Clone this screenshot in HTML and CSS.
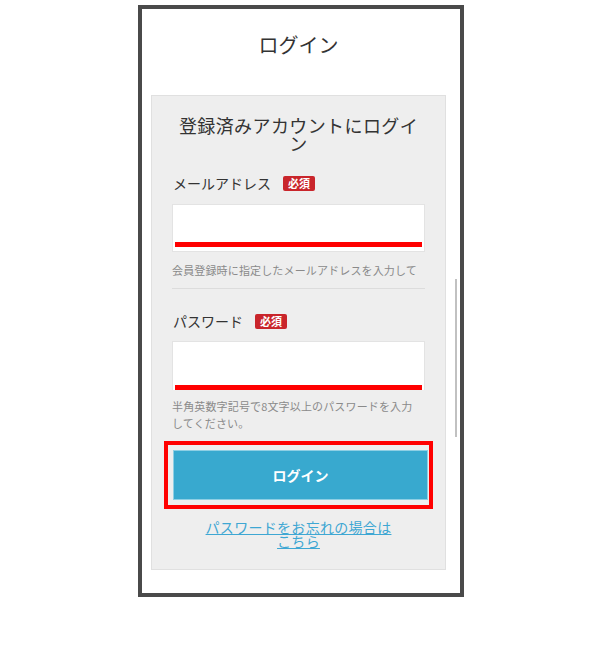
FILE: index.html
```html
<!DOCTYPE html>
<html lang="ja">
<head>
<meta charset="utf-8">
<title>ログイン</title>
<link rel="stylesheet" href="styles.css">
</head>
<body>
<div class="frame">
  <div class="content">
    <h1 class="page-title">ログイン</h1>
    <section class="panel">
      <h2 class="panel-title">登録済みアカウントにログイン</h2>
      <div class="field">
        <div class="label-row"><span class="label">メールアドレス</span><span class="badge">必須</span></div>
        <div class="input input-a"><div class="bar"></div></div>
        <p class="hint">会員登録時に指定したメールアドレスを入力して</p>
      </div>
      <div class="sep"></div>
      <div class="field">
        <div class="label-row"><span class="label">パスワード</span><span class="badge">必須</span></div>
        <div class="input input-b"><div class="bar"></div></div>
        <p class="hint">半角英数字記号で8文字以上のパスワードを入力してください。</p>
      </div>
      <div class="btn-wrap"><button class="btn" type="button">ログイン</button></div>
      <div class="link-row"><a class="link" href="#">パスワードをお忘れの場合はこちら</a></div>
    </section>
  </div>
  <div class="scrollbar"></div>
</div>
</body>
</html>
```
FILE: styles.css
```css
* { box-sizing: border-box; }
html, body { margin: 0; padding: 0; background: #fff; }
body {
  font-family: "Noto Sans CJK JP", "Noto Sans", sans-serif;
  color: #333;
}
.frame {
  position: relative;
  margin: 5px 0 0 138px;
  width: 326px;
  height: 592px;
  border: 4px solid #4a4a4a;
  background: #fff;
}
.content {
  padding: 0 14px 0 9px;
}
.page-title {
  margin: 0;
  padding-top: 21px;
  height: 86px;
  font-size: 20px;
  line-height: 30px;
  font-weight: normal;
  text-align: center;
  color: #333;
}
.panel {
  background: #eeeeee;
  border: 1px solid #e0e0e0;
  padding: 20px 20px 21px 20px;
}
.panel-title {
  margin: 0;
  font-size: 18px;
  line-height: 18px;
  letter-spacing: 0.4px;
  font-weight: normal;
  text-align: center;
  color: #333;
}
.field { display: flex; flex-direction: column; }
.label-row {
  display: flex;
  align-items: center;
  height: 20px;
  margin-top: 21px;
}
.label {
  font-size: 14px;
  line-height: 20px;
  margin-left: 1px;
  color: #333;
}
.badge {
  margin-left: 12px;
  background: #c9252b;
  color: #fff;
  font-size: 11px;
  font-weight: bold;
  line-height: 15px;
  height: 15px;
  width: 32px;
  text-align: center;
  border-radius: 2px;
}
.input {
  margin-top: 11px;
  background: #fff;
  border: 1px solid #e3e3e3;
  display: flex;
  flex-direction: column;
  justify-content: flex-end;
  padding: 0 2px;
  width: 253px;
}
.input-a { height: 48px; padding-bottom: 4px; }
.input-b { height: 49px; margin-top: 10px; padding-bottom: 0; border-bottom: none; }
.bar {
  height: 5px;
  background: #ff0000;
}
.hint {
  margin: 10px 0 0 0;
  max-width: 248px;
  font-size: 11px;
  line-height: 17px;
  color: #8a8a8a;
  letter-spacing: 0.15px;
}
.input-b + .hint { margin-top: 8px; }
.sep {
  height: 1px;
  background: #dcdcdc;
  margin-top: 9px;
}
.sep + .field .label-row { margin-top: 22px; }
.btn-wrap {
  margin: 9px -8px 0 -8px;
  border: 4px solid #ff0000;
  padding: 5px 1px 5px 5px;
}
.btn {
  display: block;
  width: 100%;
  height: 50px;
  background: #38a9cf;
  border: 1px solid #8ecfe4;
  color: #fff;
  font-family: "Noto Sans CJK JP", "Noto Sans", sans-serif;
  font-size: 14px;
  font-weight: bold;
  padding: 0;
  cursor: pointer;
}
.link-row {
  margin-top: 11px;
  display: flex;
  justify-content: center;
}
.link {
  display: block;
  width: 190px;
  text-align: center;
  font-size: 14px;
  line-height: 14px;
  letter-spacing: 0.3px;
  color: #3ea7d3;
  text-decoration: underline;
}
.scrollbar {
  position: absolute;
  left: 313px;
  top: 270px;
  width: 2px;
  height: 158px;
  background: #c1c1c1;
}
```
